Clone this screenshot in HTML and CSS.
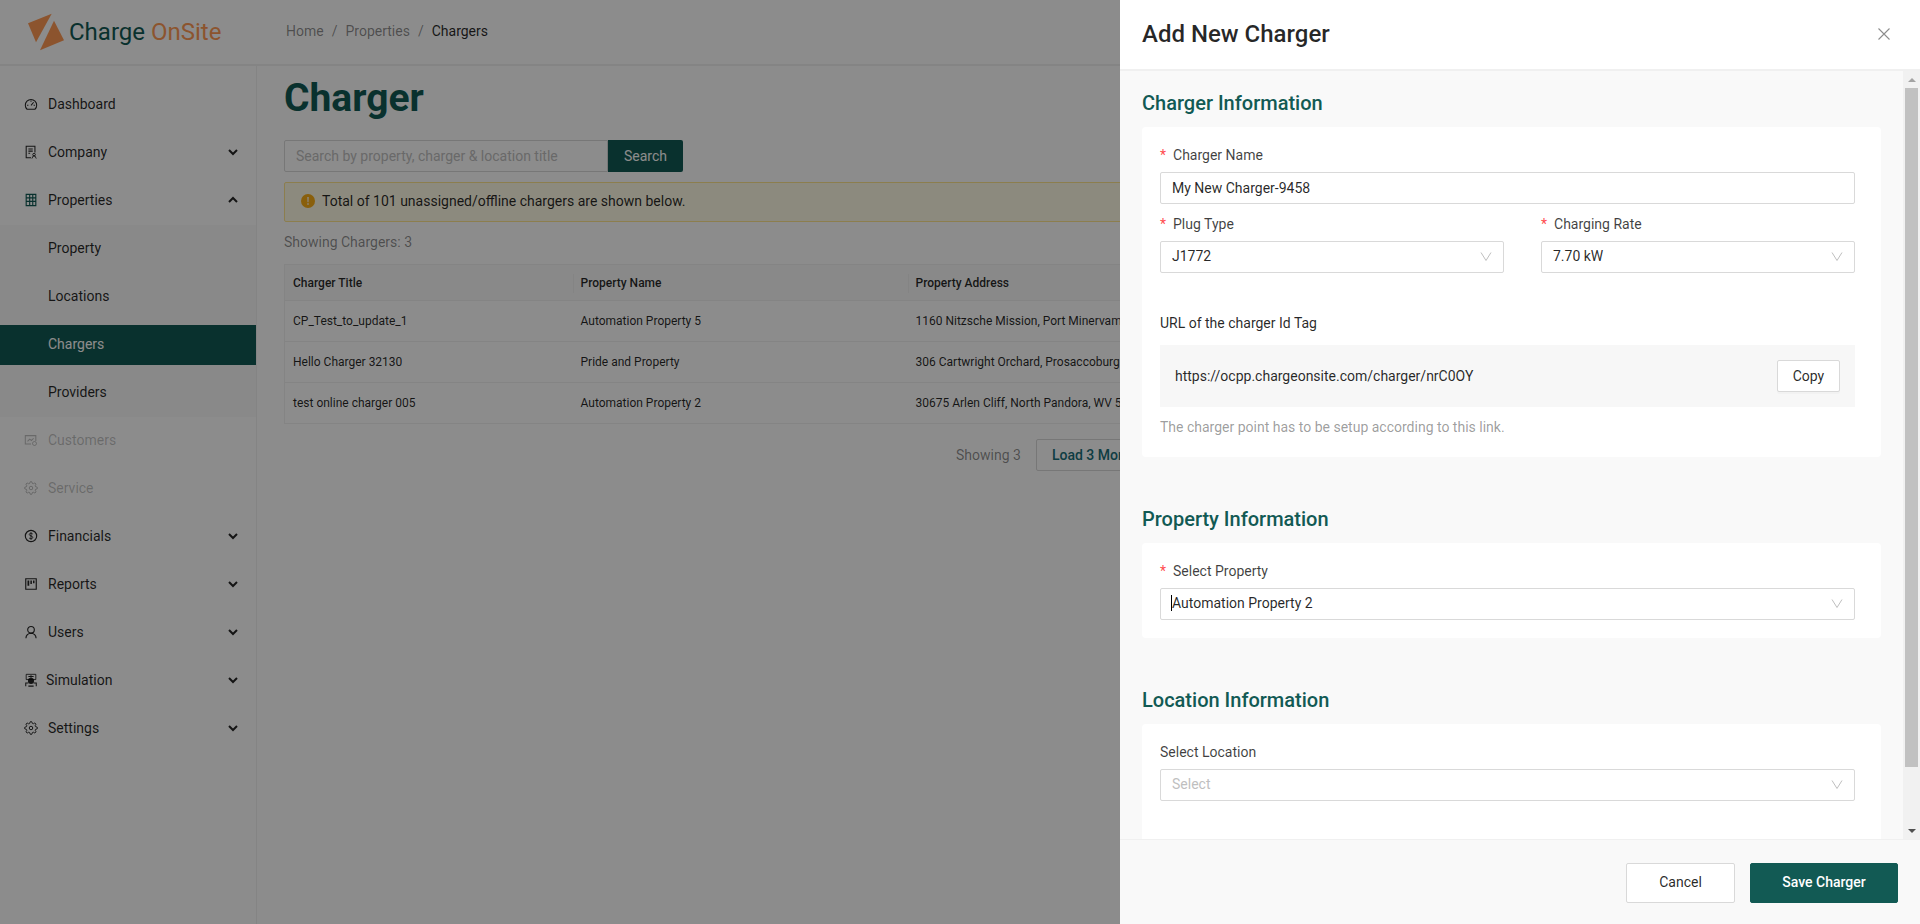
FILE: index.html
```html
<!DOCTYPE html>
<html lang="en">
  <head>
    <meta charset="UTF-8" />
    <meta name="viewport" content="width=device-width, initial-scale=1.0" />
    <title>Chargers</title>
    <link rel="stylesheet" href="styles.css">
  </head>
  <body>
    <svg class="defs" width="0" height="0">
      <symbol id="gear" viewBox="0 0 24 24">
        <path fill="none" stroke="currentColor" stroke-width="1.7" d="M12 15a3 3 0 1 0 0-6 3 3 0 0 0 0 6z" />
        <path fill="none" stroke="currentColor" stroke-width="1.7" d="M19.4 15a1.65 1.65 0 0 0 .33 1.82l.06.06a2 2 0 0 1 0 2.83 2 2 0 0 1-2.83 0l-.06-.06a1.65 1.65 0 0 0-1.82-.33 1.65 1.65 0 0 0-1 1.51V21a2 2 0 0 1-2 2 2 2 0 0 1-2-2v-.09A1.65 1.65 0 0 0 9 19.4a1.65 1.65 0 0 0-1.82.33l-.06.06a2 2 0 0 1-2.83 0 2 2 0 0 1 0-2.83l.06-.06a1.65 1.65 0 0 0 .33-1.82 1.65 1.65 0 0 0-1.51-1H3a2 2 0 0 1-2-2 2 2 0 0 1 2-2h.09A1.65 1.65 0 0 0 4.6 9a1.65 1.65 0 0 0-.33-1.82l-.06-.06a2 2 0 0 1 0-2.83 2 2 0 0 1 2.83 0l.06.06a1.65 1.65 0 0 0 1.82.33H9a1.65 1.65 0 0 0 1-1.51V3a2 2 0 0 1 2-2 2 2 0 0 1 2 2v.09a1.65 1.65 0 0 0 1 1.51 1.65 1.65 0 0 0 1.82-.33l.06-.06a2 2 0 0 1 2.83 0 2 2 0 0 1 0 2.83l-.06.06a1.65 1.65 0 0 0-.33 1.82V9a1.65 1.65 0 0 0 1.51 1H21a2 2 0 0 1 2 2 2 2 0 0 1-2 2h-.09a1.65 1.65 0 0 0-1.51 1z" />
      </symbol>
      <symbol id="chevron" viewBox="0 0 12 12">
        <path fill="none" stroke="currentColor" stroke-width="2" d="M2 4l4 4 4-4" />
      </symbol>
      <symbol id="selectArrow" viewBox="0 0 12 12">
        <path fill="none" stroke="currentColor" stroke-width="1" d="M1 2.5l5 8 5-8" />
      </symbol>
    </svg>

    <div class="topBar">
      <div class="logo">
        <svg class="logoMark" width="36" height="38" viewBox="0 0 36 38">
          <path d="M0 10.300L23.700 .7 8 29.300z" />
          <path d="M26 7.700L36 27.300 12 37.300z" />
        </svg>
        <span class="logoText">Charge <span class="logoOrange">OnSite</span></span>
      </div>
      <div class="crumbs">
        <span>Home</span><span class="crumbSep">/</span><span>Properties</span><span class="crumbSep">/</span><span class="crumbNow">Chargers</span>
      </div>
    </div>

    <div class="pageWrap">
      <div class="sideNav">
        <div class="navItem">
          <svg class="navIcon" viewBox="0 0 16 16"><path fill="none" stroke="currentColor" stroke-width="1.200" d="M3.500 14C2.200 12.800 1.500 11.200 1.500 9.300a6.500 6.500 0 0 1 13 0c0 1.900-.7 3.500-2 4.700z" /><path fill="none" stroke="currentColor" stroke-width="1.200" d="M8 9.500l3-3.500M3.500 9.500H5M11 9.500h1.500M8 4v1.500" /></svg>
          <span>Dashboard</span>
        </div>
        <div class="navItem">
          <svg class="navIcon" viewBox="0 0 16 16"><path fill="none" stroke="currentColor" stroke-width="1.200" d="M8 14.500H2.500V1.500h10v7M5 4.500h5M5 7h5M5 9.500h2" /><circle cx="11.500" cy="11" r="1.500" fill="none" stroke="currentColor" /><path fill="none" stroke="currentColor" d="M9 15.500l1.500-3h2l1.500 3" /></svg>
          <span>Company</span>
          <svg class="chev"><use href="#chevron" /></svg>
        </div>
        <div class="navItem navActive">
          <svg class="navIcon" viewBox="0 0 16 16"><path fill="none" stroke="currentColor" stroke-width="1.300" d="M2.500 1.500h11v13h-11zM2.500 5.500h11M2.500 9.500h11M6.500 1.500v13M10 1.500v13" /></svg>
          <span>Properties</span>
          <svg class="chev chevUp"><use href="#chevron" /></svg>
        </div>
        <div class="subMenu">
          <div class="navItem subItem"><span>Property</span></div>
          <div class="navItem subItem"><span>Locations</span></div>
          <div class="navItem subItem subCurrent"><span>Chargers</span></div>
          <div class="navItem subItem"><span>Providers</span></div>
        </div>
        <div class="navItem navOff">
          <svg class="navIcon" viewBox="0 0 16 16"><path fill="none" stroke="currentColor" stroke-width="1.200" d="M8 12.500H1.500V3h12v6M4 9.500l2.500-2.500 2 1.500L11 6" /><circle cx="12" cy="12" r="2.300" fill="none" stroke="currentColor" /></svg>
          <span>Customers</span>
        </div>
        <div class="navItem navOff">
          <svg class="navIcon"><use href="#gear" /></svg>
          <span>Service</span>
        </div>
        <div class="navItem">
          <svg class="navIcon" viewBox="0 0 16 16"><circle cx="8" cy="8" r="6.500" fill="none" stroke="currentColor" stroke-width="1.300" /><path fill="none" stroke="currentColor" d="M10 5.800C9.500 5 8.700 4.800 8 4.800c-1.200 0-2 .6-2 1.500 0 2 4 1.200 4 3.300 0 1-.9 1.600-2 1.600-.9 0-1.700-.3-2.200-1.100M8 3.800v8.400" /></svg>
          <span>Financials</span>
          <svg class="chev"><use href="#chevron" /></svg>
        </div>
        <div class="navItem">
          <svg class="navIcon" viewBox="0 0 16 16"><path fill="none" stroke="currentColor" stroke-width="1.300" d="M2 2h12v12H2z" /><path fill="currentColor" d="M4 4h2v6H4zM7.300 4h1.700v4H7.300zM10.300 4H12v3h-1.700z" /></svg>
          <span>Reports</span>
          <svg class="chev"><use href="#chevron" /></svg>
        </div>
        <div class="navItem">
          <svg class="navIcon" viewBox="0 0 16 16"><circle cx="8" cy="5.500" r="3.800" fill="none" stroke="currentColor" stroke-width="1.300" /><path fill="none" stroke="currentColor" stroke-width="1.300" d="M2.200 15c0-3.200 2.400-5.600 5.800-5.600s5.800 2.400 5.800 5.600" /></svg>
          <span>Users</span>
          <svg class="chev"><use href="#chevron" /></svg>
        </div>
        <div class="navItem navSim">
          <svg class="navIcon" viewBox="0 0 16 16"><path fill="none" stroke="currentColor" d="M2.500 1.500h11v6h-11z" /><circle cx="8" cy="9" r="3.500" fill="currentColor" /><path fill="none" stroke="currentColor" stroke-width="1.200" d="M2 15v-3.500h3M14 15v-3.500h-3M8 2.500v3M5 4h6M5 15h6" /></svg>
          <span>Simulation</span>
          <svg class="chev"><use href="#chevron" /></svg>
        </div>
        <div class="navItem">
          <svg class="navIcon"><use href="#gear" /></svg>
          <span>Settings</span>
          <svg class="chev"><use href="#chevron" /></svg>
        </div>
      </div>

      <div class="mainArea">
        <h1 class="pageTitle">Charger</h1>
        <div class="searchRow">
          <input class="searchInput" type="text" placeholder="Search by property, charger &amp; location title" />
          <button class="searchBtn">Search</button>
        </div>
        <div class="alertBox">
          <svg class="alertIcon" viewBox="0 0 14 14"><circle cx="7" cy="7" r="7" fill="#faad14" /><path fill="#fff" d="M6.300 3h1.400l-.2 5.200h-1zM6.300 9.300h1.400v1.500H6.300z" /></svg>
          <span>Total of 101 unassigned/offline chargers are shown below.</span>
        </div>
        <div class="countLine">Showing Chargers: 3</div>
        <table class="chargerTable">
          <thead>
            <tr><th class="colTitle">Charger Title</th><th class="colName">Property Name</th><th>Property Address</th></tr>
          </thead>
          <tbody>
            <tr><td>CP_Test_to_update_1</td><td>Automation Property 5</td><td>1160 Nitzsche Mission, Port Minervamouth</td></tr>
            <tr><td>Hello Charger 32130</td><td>Pride and Property</td><td>306 Cartwright Orchard, Prosaccoburgh</td></tr>
            <tr><td>test online charger 005</td><td>Automation Property 2</td><td>30675 Arlen Cliff, North Pandora, WV 50632</td></tr>
          </tbody>
        </table>
        <div class="loadRow">
          <span class="showingText">Showing 3</span>
          <button class="loadBtn">Load 3 More</button>
        </div>
      </div>
    </div>

    <div class="mask"></div>

    <div class="drawer">
      <div class="drawerHead">
        <h2>Add New Charger</h2>
        <svg class="closeIcon" viewBox="0 0 14 14"><path fill="none" stroke="currentColor" stroke-width="1.100" d="M1.500 1.500l11 11M12.500 1.500l-11 11" /></svg>
      </div>
      <div class="drawerMiddle">
        <div class="drawerBody">
          <h3 class="sectionTitle">Charger Information</h3>
          <div class="formCard">
            <div class="fieldLabel"><span class="star">*</span>Charger Name</div>
            <input class="textField" type="text" value="My New Charger-9458" />
            <div class="twoCols">
              <div>
                <div class="fieldLabel"><span class="star">*</span>Plug Type</div>
                <div class="selectField"><span>J1772</span><svg class="selectIcon"><use href="#selectArrow" /></svg></div>
              </div>
              <div>
                <div class="fieldLabel"><span class="star">*</span>Charging Rate</div>
                <div class="selectField"><span>7.70 kW</span><svg class="selectIcon"><use href="#selectArrow" /></svg></div>
              </div>
            </div>
            <div class="urlLabel">URL of the charger Id Tag</div>
            <div class="urlBox">
              <span>https://ocpp.chargeonsite.com/charger/nrC0OY</span>
              <button class="copyBtn">Copy</button>
            </div>
            <div class="hintText">The charger point has to be setup according to this link.</div>
          </div>

          <h3 class="sectionTitle">Property Information</h3>
          <div class="formCard propertyCard">
            <div class="fieldLabel"><span class="star">*</span>Select Property</div>
            <div class="selectField"><span class="caretText">Automation Property 2</span><svg class="selectIcon"><use href="#selectArrow" /></svg></div>
          </div>

          <h3 class="sectionTitle">Location Information</h3>
          <div class="formCard lastCard">
            <div class="fieldLabel">Select Location</div>
            <div class="selectField placeholder"><span>Select</span><svg class="selectIcon"><use href="#selectArrow" /></svg></div>
          </div>
        </div>
        <div class="scrollTrack">
          <div class="scrollBtn"><span class="arrowUp"></span></div>
          <div class="scrollThumb"></div>
          <div class="scrollBtn scrollBtnEnd"><span class="arrowDown"></span></div>
        </div>
      </div>
      <div class="drawerFoot">
        <button class="cancelBtn">Cancel</button>
        <button class="saveBtn">Save Charger</button>
      </div>
    </div>
  </body>
</html>
```

FILE: styles.css
```css
* {
  box-sizing: border-box;
}
body {
  margin: 0;
  height: 924px;
  overflow: hidden;
  background-color: white;
  font-family: Roboto, "Liberation Sans", sans-serif;
  font-size: 14px;
  color: rgba(0, 0, 0, 0.85);
}
button,
input {
  font-family: inherit;
  font-size: 14px;
}
.defs {
  display: block;
  height: 0;
}
.topBar {
  height: 66px;
  display: flex;
  align-items: center;
  border-bottom: 2px solid #f0f0f0;
}
.logo {
  width: 286px;
  padding-left: 28px;
  display: flex;
  align-items: center;
  gap: 5px;
}
.logoMark {
  fill: #ff9a55;
}
.logoText {
  font-size: 24px;
  color: #125a54;
}
.logoOrange {
  color: #ff9a55;
}
.crumbs {
  display: flex;
  padding-bottom: 2px;
  color: rgba(0, 0, 0, 0.45);
}
.crumbSep {
  margin: 0 8px;
}
.crumbNow {
  color: rgba(0, 0, 0, 0.85);
}
.pageWrap {
  display: flex;
  height: 858px;
}
.sideNav {
  width: 257px;
  flex-shrink: 0;
  padding-top: 19px;
  border-right: 1px solid #f0f0f0;
  display: flex;
  flex-direction: column;
  gap: 8px;
}
.navItem {
  height: 40px;
  flex-shrink: 0;
  display: flex;
  align-items: center;
  padding-left: 24px;
  padding-bottom: 2px;
}
.navIcon {
  width: 14px;
  height: 14px;
  margin-right: 10px;
  flex-shrink: 0;
}
.navActive {
  color: #125a54;
}
.navActive span {
  color: rgba(0, 0, 0, 0.85);
}
.navSim span {
  margin-left: -2px;
}
.navOff {
  color: rgba(0, 0, 0, 0.25);
}
.chev {
  width: 12px;
  height: 12px;
  margin-left: auto;
  margin-right: 17px;
  color: rgba(0, 0, 0, 0.85);
}
.chevUp {
  transform: rotate(180deg);
}
.subMenu {
  background-color: #fafafa;
  margin: -4px 0;
  padding: 4px 0;
  display: flex;
  flex-direction: column;
  gap: 8px;
}
.subItem {
  padding-left: 48px;
}
.subCurrent {
  background-color: #125a54;
  color: white;
}
.mainArea {
  flex: 1;
  min-width: 0;
  padding-left: 27px;
}
.pageTitle {
  margin: 8px 0 18px;
  font-size: 39px;
  line-height: 48px;
  font-weight: 700;
  color: #125a54;
}
.searchRow {
  display: flex;
}
.searchInput {
  width: 324px;
  height: 32px;
  padding: 0 11px;
  border: 1px solid #d9d9d9;
  border-radius: 2px 0 0 2px;
  outline: none;
}
.searchInput::placeholder {
  color: #bfbfbf;
}
.searchBtn {
  width: 75px;
  height: 32px;
  border: none;
  border-radius: 0 2px 2px 0;
  background-color: #125a54;
  color: white;
}
.alertBox {
  margin-top: 10px;
  height: 40px;
  width: 1600px;
  display: flex;
  align-items: center;
  padding-left: 16px;
  padding-bottom: 2px;
  border: 1px solid #ffe58f;
  border-radius: 2px;
  background-color: #fffbe6;
}
.alertIcon {
  width: 14px;
  height: 14px;
  margin-right: 7px;
}
.countLine {
  margin-top: 10px;
  line-height: 20px;
  color: rgba(0, 0, 0, 0.45);
}
.chargerTable {
  margin-top: 12px;
  width: 1600px;
  table-layout: fixed;
  border-collapse: collapse;
  font-size: 12px;
  border: 1px solid #f0f0f0;
}
.chargerTable th {
  height: 36px;
  padding: 0 8px;
  text-align: left;
  font-weight: 500;
  background-color: #fafafa;
  border-bottom: 1px solid #f0f0f0;
  position: relative;
}
.chargerTable th + th::before {
  content: "";
  position: absolute;
  left: 0;
  top: 9px;
  height: 19px;
  width: 1px;
  background-color: #f0f0f0;
}
.colTitle {
  width: 288px;
}
.colName {
  width: 335px;
}
.chargerTable td {
  height: 41px;
  padding: 0 8px;
  border-bottom: 1px solid #f0f0f0;
}
.loadRow {
  margin-top: 15px;
  padding-left: 672px;
  display: flex;
  align-items: center;
  gap: 15px;
}
.showingText {
  color: rgba(0, 0, 0, 0.45);
}
.loadBtn {
  height: 32px;
  width: 150px;
  padding: 0 15px;
  text-align: left;
  background-color: white;
  border: 1px solid #d9d9d9;
  border-radius: 2px;
  font-weight: 500;
  color: #1a6f7a;
}
.mask {
  position: fixed;
  inset: 0;
  background-color: rgba(0, 0, 0, 0.45);
}
.drawer {
  position: fixed;
  top: 0;
  right: 0;
  bottom: 0;
  width: 800px;
  display: flex;
  flex-direction: column;
  background-color: #f9f9f9;
}
.drawerHead {
  height: 71px;
  flex-shrink: 0;
  display: flex;
  align-items: center;
  justify-content: space-between;
  padding: 0 29px 2px 22px;
  background-color: white;
  border-bottom: 2px solid #f0f0f0;
}
.drawerHead h2 {
  margin: 0;
  font-size: 24px;
  font-weight: 500;
}
.closeIcon {
  width: 14px;
  height: 14px;
  color: rgba(0, 0, 0, 0.45);
}
.drawerMiddle {
  flex: 1;
  min-height: 0;
  display: flex;
}
.drawerBody {
  flex: 1;
  min-width: 0;
  overflow: hidden;
  padding: 0 22px;
}
.scrollTrack {
  width: 17px;
  flex-shrink: 0;
  display: flex;
  flex-direction: column;
  background-color: #f1f1f1;
}
.scrollBtn {
  height: 17px;
  flex-shrink: 0;
  display: flex;
  align-items: center;
  justify-content: center;
}
.scrollBtnEnd {
  margin-top: auto;
}
.arrowUp,
.arrowDown {
  width: 0;
  height: 0;
  border-left: 4px solid transparent;
  border-right: 4px solid transparent;
}
.arrowUp {
  border-bottom: 4px solid #a3a3a3;
}
.arrowDown {
  border-top: 4px solid #505050;
}
.scrollThumb {
  height: 679px;
  margin: 0 2px;
  background-color: #c1c1c1;
}
.sectionTitle {
  margin: 0;
  padding-top: 20px;
  height: 56px;
  font-size: 20px;
  line-height: 24px;
  font-weight: 500;
  color: #125a54;
}
.formCard {
  background-color: white;
  border-radius: 4px;
  padding: 18px 26px 0 18px;
  margin-bottom: 30px;
}
.propertyCard {
  height: 95px;
}
.lastCard {
  height: 157px;
  margin-bottom: 0;
}
.fieldLabel {
  line-height: 20px;
  margin-bottom: 7px;
  color: rgba(0, 0, 0, 0.75);
}
.star {
  color: #ff4d4f;
  margin-right: 7px;
  font-size: 14px;
}
.textField,
.selectField {
  width: 100%;
  height: 32px;
  padding: 0 11px;
  display: flex;
  align-items: center;
  justify-content: space-between;
  background-color: white;
  border: 1px solid #d9d9d9;
  border-radius: 2px;
  color: rgba(0, 0, 0, 0.85);
  outline: none;
}
.selectField {
  padding-bottom: 2px;
}
.selectIcon {
  width: 12px;
  height: 12px;
  color: #bfbfbf;
}
.placeholder {
  color: #bfbfbf;
}
.caretText {
  border-left: 1px solid black;
  margin-left: -1px;
  line-height: 16px;
}
.twoCols {
  display: grid;
  grid-template-columns: 344px 314px;
  gap: 37px;
  margin-top: 10px;
}
.urlLabel {
  margin-top: 40px;
  line-height: 20px;
}
.urlBox {
  margin-top: 12px;
  height: 62px;
  padding: 0 15px;
  display: flex;
  align-items: center;
  justify-content: space-between;
  background-color: #f7f7f7;
}
.copyBtn {
  width: 63px;
  height: 32px;
  background-color: white;
  border: 1px solid #d9d9d9;
  border-radius: 2px;
  box-shadow: 0 2px 0 rgba(0, 0, 0, 0.02);
  color: rgba(0, 0, 0, 0.85);
}
.hintText {
  margin-top: 10px;
  padding-bottom: 20px;
  line-height: 20px;
  color: rgba(0, 0, 0, 0.4);
}
.drawerFoot {
  height: 85px;
  flex-shrink: 0;
  display: flex;
  justify-content: flex-end;
  gap: 15px;
  padding: 23px 22px 0 0;
  border-top: 1px solid #f0f0f0;
}
.cancelBtn,
.saveBtn {
  height: 40px;
  padding-bottom: 3px;
  border-radius: 2px;
}
.cancelBtn {
  width: 109px;
  background-color: white;
  border: 1px solid #d9d9d9;
  color: rgba(0, 0, 0, 0.85);
}
.saveBtn {
  width: 148px;
  background-color: #125a54;
  border: 1px solid #125a54;
  color: white;
  font-weight: 500;
}
```
